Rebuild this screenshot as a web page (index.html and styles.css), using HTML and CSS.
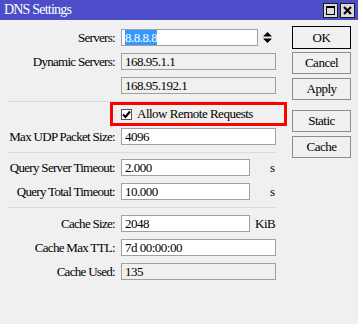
FILE: index.html
```html
<!DOCTYPE html>
<html>
<head>
    <title>DNS Settings</title>
    <link rel="stylesheet" href="styles.css">
</head>
<body>
    <div class="titlebar">
        <span class="title">DNS Settings</span>
        <div class="title-buttons">
            <span class="tb-btn"><span class="max-icon"></span></span>
            <span class="tb-btn">
                <svg width="9" height="9" viewBox="0 0 9 9"><path d="M1 1L8 8M8 1L1 8" stroke="#000" stroke-width="2.2"/></svg>
            </span>
        </div>
    </div>

    <div class="content">
        <div class="form">
            <div class="row">
                <span class="label">Servers:</span>
                <span class="field short"><span class="selected">8.8.8.8</span></span>
                <svg class="spinner" width="9" height="11" viewBox="0 0 9 11">
                    <path d="M4.5 0L9 4.5H0Z M0 6.5H9L4.5 11Z" fill="#000"/>
                </svg>
            </div>
            <div class="row">
                <span class="label">Dynamic Servers:</span>
                <span class="field disabled">168.95.1.1</span>
            </div>
            <div class="row">
                <span class="label"></span>
                <span class="field disabled">168.95.192.1</span>
            </div>

            <div class="sep first"></div>

            <div class="check-row">
                <span class="checkbox">
                    <svg width="9" height="9" viewBox="0 0 9 9"><path d="M1 4.5L3.5 7L8 1.5" stroke="#000" stroke-width="2" fill="none"/></svg>
                </span>
                <span>Allow Remote Requests</span>
            </div>

            <div class="row after-check">
                <span class="label">Max UDP Packet Size:</span>
                <span class="field">4096</span>
            </div>

            <div class="sep second"></div>

            <div class="row">
                <span class="label">Query Server Timeout:</span>
                <span class="field mid">2.000</span>
                <span class="unit sec">s</span>
            </div>
            <div class="row">
                <span class="label">Query Total Timeout:</span>
                <span class="field mid">10.000</span>
                <span class="unit sec">s</span>
            </div>

            <div class="sep third"></div>

            <div class="row">
                <span class="label">Cache Size:</span>
                <span class="field mid">2048</span>
                <span class="unit">KiB</span>
            </div>
            <div class="row">
                <span class="label">Cache Max TTL:</span>
                <span class="field">7d 00:00:00</span>
            </div>
            <div class="row">
                <span class="label">Cache Used:</span>
                <span class="field disabled">135</span>
            </div>
        </div>

        <div class="buttons">
            <div class="btn ok">OK</div>
            <div class="btn">Cancel</div>
            <div class="btn">Apply</div>
            <div class="btn static">Static</div>
            <div class="btn">Cache</div>
        </div>
    </div>
</body>
</html>
```

FILE: styles.css
```css
body {
    margin: 0;
    background: #f0f0f0;
    font-family: 'Liberation Serif', serif;
    font-size: 13px;
    letter-spacing: -0.5px;
    color: #000;
}

/* Title bar */
.titlebar {
    height: 20px;
    background: #4d4dc9;
    display: flex;
    align-items: center;
    justify-content: space-between;
    padding: 0 3px 0 4px;
}

.title {
    color: #fff;
    font-size: 14px;
    letter-spacing: -0.8px;
}

.title-buttons {
    display: flex;
    gap: 2px;
}

.tb-btn {
    width: 15px;
    height: 15px;
    box-sizing: border-box;
    border: 1px solid #1a1a1a;
    background: #dcdcdc;
    display: flex;
    align-items: center;
    justify-content: center;
}

.max-icon {
    width: 9px;
    height: 9px;
    box-sizing: border-box;
    border: 1px solid #000;
    border-top-width: 2px;
}

/* Layout */
.content {
    display: flex;
}

.form {
    width: 292px;
    padding-top: 9px;
}

.row {
    display: flex;
    align-items: center;
    height: 17px;
    margin-bottom: 7px;
}

.label {
    width: 115px;
    margin-right: 6px;
    text-align: right;
    white-space: nowrap;
    letter-spacing: -0.7px;
    flex: none;
}

.field {
    width: 155px;
    height: 17px;
    box-sizing: border-box;
    border: 1px solid #a0a0a0;
    background: #fff;
    padding: 0 3px;
    line-height: 15px;
    white-space: nowrap;
}

.field.short { width: 137px; }
.field.mid { width: 129px; }
.field.disabled { background: #f0f0f0; }

.selected {
    background: #3399ff;
    color: #fff;
}

.spinner {
    margin-left: 5px;
}

.unit { margin-left: 5px; }
.unit.sec { margin-left: 20px; }

/* Separators */
.sep {
    height: 1px;
    width: 268px;
    margin-left: 8px;
    background: #dadada;
}

.sep.first { margin-top: 2px; }
.sep.second { margin-top: 3px; margin-bottom: 6px; }
.sep.third { margin-top: 2px; margin-bottom: 7px; }

/* Checkbox row with red highlight */
.check-row {
    margin-left: 110px;
    width: 177px;
    height: 24px;
    box-sizing: border-box;
    border: 3px solid #ff0000;
    display: flex;
    align-items: center;
    padding-left: 8px;
    gap: 5px;
}

.checkbox {
    width: 11px;
    height: 11px;
    box-sizing: border-box;
    border: 1px solid #555;
    background: #fff;
    display: flex;
    align-items: center;
    justify-content: center;
}

.after-check { margin-top: 2px; }

/* Buttons */
.buttons {
    display: flex;
    flex-direction: column;
    padding-top: 6px;
}

.btn {
    width: 59px;
    height: 22px;
    margin-bottom: 4px;
    box-sizing: border-box;
    border: 1px solid #8c8c8c;
    background: #f0f0f0;
    display: flex;
    align-items: center;
    justify-content: center;
}

.btn.ok {
    height: 23px;
    margin-bottom: 3px;
    border-color: #000;
}

.btn.static {
    margin-top: 6px;
}
```
